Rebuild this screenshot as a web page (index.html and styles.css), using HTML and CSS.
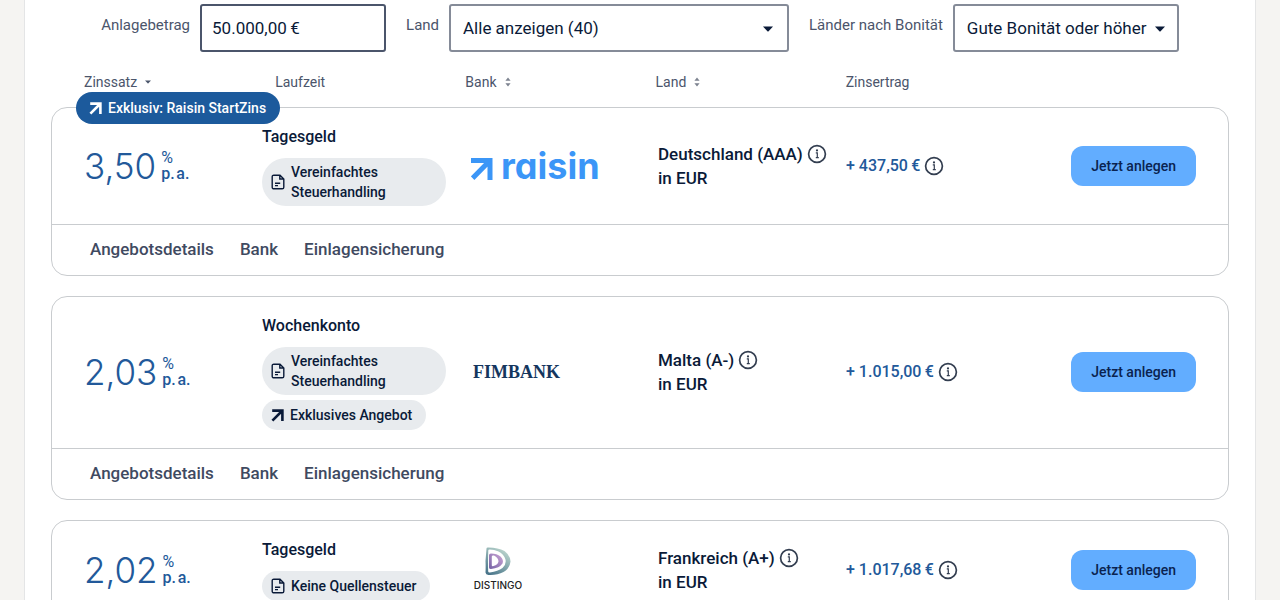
FILE: index.html
```html
<!DOCTYPE html>
<html lang="de">
<head>
<meta charset="utf-8">
<meta name="viewport" content="width=device-width, initial-scale=1">
<title>Angebote</title>
<link rel="stylesheet" href="styles.css">
</head>
<body>
<svg class="sprite" aria-hidden="true">
  <symbol id="arrow" viewBox="0 0 13 13"><path d="M1.2 1.6H11.4V12M11 2L1.4 11.6" fill="none" stroke="currentColor" stroke-width="2.6"/></symbol>
  <symbol id="doc" viewBox="0 0 14 16"><path d="M3 1.2H9L12.8 5V13.2A1.6 1.6 0 0 1 11.2 14.8H3A1.6 1.6 0 0 1 1.2 13.2V2.8A1.6 1.6 0 0 1 3 1.2ZM8.8 1.4V5H12.6M4 9.2H9.2M4 11.6H7" fill="none" stroke="currentColor" stroke-width="1.4"/></symbol>
  <symbol id="info" viewBox="0 0 20 20"><circle cx="10" cy="10" r="8.4" fill="none" stroke="currentColor" stroke-width="1.7"/><path d="M8.8 8.8H10.3V13.6M8.8 13.6H11.8" fill="none" stroke="currentColor" stroke-width="1.2"/><circle cx="10" cy="6.4" r="1.1" fill="currentColor"/></symbol>
  <symbol id="caret" viewBox="0 0 10 6"><path d="M0 .5H10L5.6 5.2Q5 5.8 4.4 5.2Z" fill="currentColor"/></symbol>
  <symbol id="sort" viewBox="0 0 6 10"><path d="M.4 3.8L3 .4L5.6 3.8ZM.4 6.2L3 9.6L5.6 6.2Z" fill="currentColor"/></symbol>
</svg>
<main class="page">
  <form class="filters">
    <div class="field">
      <label for="amount">Anlagebetrag</label>
      <input class="control amount" id="amount" type="text" value="50.000,00&#8201;€">
    </div>
    <div class="field">
      <label for="country">Land</label>
      <div class="select country">
        <select class="control" id="country"><option>Alle anzeigen (40)</option></select>
        <svg class="caret"><use href="#caret"/></svg>
      </div>
    </div>
    <div class="field">
      <label for="rating">Länder nach Bonität</label>
      <div class="select rating">
        <select class="control" id="rating"><option>Gute Bonität oder höher</option></select>
        <svg class="caret"><use href="#caret"/></svg>
      </div>
    </div>
  </form>

  <div class="columns">
    <button class="sort" type="button">Zinssatz <svg class="sort-down"><use href="#caret"/></svg></button>
    <span>Laufzeit</span>
    <button class="sort" type="button">Bank <svg class="sort-both"><use href="#sort"/></svg></button>
    <button class="sort" type="button">Land <svg class="sort-both"><use href="#sort"/></svg></button>
    <span>Zinsertrag</span>
  </div>

  <section class="offers">
    <article class="card">
      <div class="badge"><svg class="arrow"><use href="#arrow"/></svg>Exklusiv: Raisin StartZins</div>
      <div class="offer">
        <div class="rate"><span class="number">3,50</span><div class="unit"><div class="percent">%</div><div>p.&#8202;a.</div></div></div>
        <div class="term">
          <h2>Tagesgeld</h2>
          <ul class="tags"><li class="tag wide"><svg class="doc"><use href="#doc"/></svg><span>Vereinfachtes Steuerhandling</span></li></ul>
        </div>
        <div class="raisin"><svg class="raisin-arrow" viewBox="0 0 22 22"><path d="M0 2.500H19V22M19 2.600L1.600 20.200" fill="none" stroke="currentColor" stroke-width="5"/></svg><span>raisin</span></div>
        <div class="place"><div class="line">Deutschland (AAA) <svg class="info"><use href="#info"/></svg></div><div>in EUR</div></div>
        <div class="yield">+ 437,50&#8201;€ <svg class="info"><use href="#info"/></svg></div>
        <button class="invest" type="button">Jetzt anlegen</button>
      </div>
      <nav class="links"><a href="#">Angebotsdetails</a><a href="#">Bank</a><a href="#">Einlagensicherung</a></nav>
    </article>

    <article class="card">
      <div class="offer">
        <div class="rate"><span class="number">2,03</span><div class="unit"><div class="percent">%</div><div>p.&#8202;a.</div></div></div>
        <div class="term">
          <h2>Wochenkonto</h2>
          <ul class="tags">
            <li class="tag wide"><svg class="doc"><use href="#doc"/></svg><span>Vereinfachtes Steuerhandling</span></li>
            <li class="tag"><svg class="arrow"><use href="#arrow"/></svg><span>Exklusives Angebot</span></li>
          </ul>
        </div>
        <div class="fimbank">FIMBANK</div>
        <div class="place"><div class="line">Malta (A-) <svg class="info"><use href="#info"/></svg></div><div>in EUR</div></div>
        <div class="yield">+ 1.015,00&#8201;€ <svg class="info"><use href="#info"/></svg></div>
        <button class="invest" type="button">Jetzt anlegen</button>
      </div>
      <nav class="links"><a href="#">Angebotsdetails</a><a href="#">Bank</a><a href="#">Einlagensicherung</a></nav>
    </article>

    <article class="card">
      <div class="offer">
        <div class="rate"><span class="number">2,02</span><div class="unit"><div class="percent">%</div><div>p.&#8202;a.</div></div></div>
        <div class="term">
          <h2>Tagesgeld</h2>
          <ul class="tags"><li class="tag"><svg class="doc"><use href="#doc"/></svg><span>Keine Quellensteuer</span></li></ul>
        </div>
        <div class="distingo">
          <svg class="distingo-mark" viewBox="0 0 26 29">
            <defs>
              <linearGradient id="outer" x1="0" y1="1" x2=".6" y2="0"><stop offset="0" stop-color="#3f6c84"/><stop offset=".6" stop-color="#85a9ad"/><stop offset="1" stop-color="#b9d3cc"/></linearGradient>
              <linearGradient id="inner" x1="0" y1="1" x2="1" y2="0"><stop offset="0" stop-color="#7462a4"/><stop offset="1" stop-color="#cda6d6"/></linearGradient>
            </defs>
            <path fill="url(#outer)" fill-rule="evenodd" d="M1.5 1.5Q1.6.4 3 .5Q13 .4 19.500 4Q25.500 8.500 25.500 14.500Q25 21 18.500 25Q12 28.500 3.500 28Q.7 27.800.5 25.500Q.8 20 .5 14ZM3.300 3.500Q2.800 14 3.200 24.500Q3.400 25.600 5 25.400Q13 24.500 17.500 21Q21.500 17.500 20.500 12.500Q19 7 13 4.200Q9 2.500 4.500 2.600Q3.300 2.600 3.300 3.500Z"/>
            <path fill="url(#inner)" fill-rule="evenodd" d="M4 8Q4.200 6.400 6 6.500Q12 6.500 15.500 9.500Q19 13 17.500 16.500Q14.500 21 6 22Q4 22 4 20.500ZM6.800 9.500V18.500Q7 19.500 8.500 19Q13 17.500 13.500 14.500Q13.500 11 9 8.600Q7 8 6.800 9.500Z"/>
          </svg>
          <span>DISTINGO</span>
        </div>
        <div class="place"><div class="line">Frankreich (A+) <svg class="info"><use href="#info"/></svg></div><div>in EUR</div></div>
        <div class="yield">+ 1.017,68&#8201;€ <svg class="info"><use href="#info"/></svg></div>
        <button class="invest" type="button">Jetzt anlegen</button>
      </div>
      <nav class="links"><a href="#">Angebotsdetails</a><a href="#">Bank</a><a href="#">Einlagensicherung</a></nav>
    </article>
  </section>
</main>
</body>
</html>
```

FILE: styles.css
```css
* { box-sizing: border-box; }
body {
  margin: 0;
  padding: 0 24px;
  background: #f5f4f2;
  color: #0a1a38;
  font-family: Roboto, "Liberation Sans", sans-serif;
  font-size: 16px;
  line-height: 24px;
}
svg { flex: none; display: block; }
.sprite { position: absolute; width: 0; height: 0; }
button, input, select { font: inherit; color: inherit; }
.page {
  height: 100vh;
  overflow: hidden;
  padding: 4px 26px 0;
  background: #fff;
  border: solid #e4e5e6;
  border-width: 0 1px;
}

.filters { display: flex; justify-content: center; gap: 20px; }
.field { display: flex; align-items: center; gap: 10px; }
.field label {
  padding-bottom: 6px;
  color: #4b556b;
  font-size: 15px;
  white-space: nowrap;
}
.control {
  width: 100%;
  height: 48px;
  padding: 0 12px;
  border: 2px solid #858b98;
  border-radius: 3px;
  background: #fff;
  font-size: 17px;
  appearance: none;
}
.amount { width: 186px; padding: 0 10px; border-color: #4b556b; }
.select { position: relative; }
.country { width: 340px; }
.rating { width: 226px; }
.caret { position: absolute; right: 16px; top: 22px; width: 10px; height: 6px; pointer-events: none; }
.rating .caret { right: 14px; }

.columns, .offer { display: grid; align-items: center; }
.columns {
  grid-template-columns: 191fr 190fr 190fr 190fr 350fr;
  margin: 20px 33px 15px;
  color: #4b556b;
  font-size: 14px;
  line-height: 20px;
}
.sort { display: flex; align-items: center; gap: 8px; padding: 0; border: 0; background: none; cursor: pointer; }
.sort-down { width: 6px; height: 4px; }
.sort-both { width: 6px; height: 10px; color: #7d8390; }

.offers { display: flex; flex-direction: column; gap: 20px; }
.card { position: relative; border: 1px solid #c9cccf; border-radius: 16px; }
.badge {
  position: absolute;
  left: 24px;
  top: -16px;
  display: flex;
  align-items: center;
  gap: 6px;
  height: 32px;
  padding: 0 14px 0 13px;
  border-radius: 16px;
  background: #1c5a9c;
  color: #fff;
  font-size: 14px;
  font-weight: 500;
}
.arrow { width: 13px; height: 13px; }
.offer {
  grid-template-columns: 178fr 209fr 187fr 188fr 190fr 160fr;
  padding: 17px 32px 18px;
  border-bottom: 1px solid #c9cccf;
  font-weight: 500;
}
.rate { display: flex; align-items: center; gap: 5px; color: #22599a; }
.number { font-family: Inter, sans-serif; font-size: 35px; font-weight: 300; line-height: 40px; }
.unit { line-height: 16px; }
.percent { font-weight: 400; }
h2 { margin: 0 0 9px; font-size: 16px; font-weight: 500; line-height: 24px; }
.tags { display: flex; flex-direction: column; align-items: flex-start; gap: 5px; margin: 0; padding: 0; list-style: none; }
.tag {
  display: flex;
  align-items: center;
  gap: 6px;
  padding: 5px 14px 5px 9px;
  border-radius: 24px;
  background: #e8ebee;
  font-size: 14px;
  line-height: 20px;
}
.wide { width: 184px; padding: 4px 40px 4px 9px; }
.doc { width: 14px; height: 16px; }
.raisin { display: flex; align-items: center; gap: 8px; color: #3b96f7; }
.raisin-arrow { width: 22px; height: 22px; margin-top: 6px; }
.raisin span {
  font-family: Inter, sans-serif;
  font-size: 36px;
  font-weight: 700;
  font-feature-settings: "cv11";
  line-height: 32px;
}
.fimbank { padding-left: 2px; color: #14365e; font-family: "Liberation Serif", serif; font-size: 18px; font-weight: 700; }
.distingo { display: flex; flex-direction: column; align-items: center; width: 54px; gap: 2px; color: #222; }
.distingo-mark { width: 26px; height: 29px; }
.distingo span { font-family: Inter, sans-serif; font-size: 10px; line-height: 14px; }
.line, .yield { display: flex; align-items: center; gap: 4px; white-space: nowrap; }
.place { font-size: 17px; }
.info { width: 20px; height: 20px; color: #333e50; }
.yield { color: #22599a; }
.invest {
  justify-self: end;
  height: 40px;
  padding: 0 20px;
  border: 0;
  border-radius: 12px;
  background: #62adff;
  color: #0a2350;
  font-size: 14px;
  font-weight: 500;
  cursor: pointer;
}
.links { display: flex; gap: 26px; padding: 12px 38px 14px; font-size: 17px; }
.links a { color: #3f4a61; font-weight: 500; text-decoration: none; }
```
